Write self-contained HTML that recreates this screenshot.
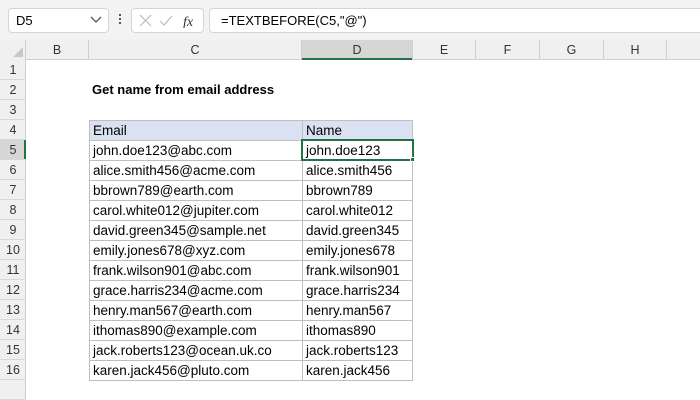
<!DOCTYPE html><html><head><style>
*{margin:0;padding:0;box-sizing:border-box}
body{width:700px;height:400px;background:#fff;font-family:"Liberation Sans",Calibri,sans-serif;position:relative;overflow:hidden;font-size:13.5px;color:#000}
.a{position:absolute}
</style></head><body>
<div class="a" style="left:0;top:0;width:700px;height:40px;background:#f3f3f3"></div>
<div class="a" style="left:8px;top:8px;width:101px;height:25px;background:#fff;border:1px solid #d5d5d5;border-radius:4px;font-size:13px;padding:4px 0 0 7px">D5</div>
<svg class="a" style="left:90px;top:16px" width="12" height="8"><path d="M1 1l5 5 5-5" stroke="#555" fill="none" stroke-width="1.3"/></svg>
<div class="a" style="left:119px;top:14px;width:2px;height:2px;background:#555;box-shadow:0 4px #555,0 8px #555"></div>
<div class="a" style="left:131px;top:8px;width:73px;height:25px;background:#fff;border:1px solid #d5d5d5;border-radius:4px"></div>
<svg class="a" style="left:138px;top:14px" width="60" height="14"><path d="M2 1l11 11M13 1L2 12" stroke="#bbb" stroke-width="1.2"/><path d="M22 7l4 4 8-9" stroke="#bbb" fill="none" stroke-width="1.2"/><text x="45" y="12" font-family="Liberation Serif" font-style="italic" font-size="14" fill="#333">fx</text></svg>
<div class="a" style="left:209px;top:8px;width:495px;height:25px;background:#fff;border:1px solid #d5d5d5;border-radius:4px;font-size:13px;padding:4px 0 0 11px">=TEXTBEFORE(C5,"@")</div>
<div class="a" style="left:0;top:40px;width:700px;height:20px;background:#f0f0f0;border-bottom:1px solid #d0d0d0"></div>
<div class="a" style="left:0;top:40px;width:26px;height:360px;background:#f0f0f0;border-right:1px solid #d0d0d0"></div>
<svg class="a" style="left:12px;top:46px" width="12" height="12"><path d="M11 1V11H1z" fill="#c8c8c8"/></svg>
<div class="a" style="left:302px;top:40px;width:111px;height:20px;background:#d6d6d6;border-bottom:2px solid #217346"></div>
<div class="a" style="left:0;top:140px;width:26px;height:20px;background:#d6d6d6;border-right:2px solid #217346"></div>
<div id="cols"></div><div id="rows"></div>
<div class="a" style="left:89px;top:120px;width:324px;height:20px;background:#d9e1f2"></div>
<div id="grid"></div>
<div class="a" style="left:92px;top:82px;font-weight:bold;font-size:13px">Get name from email address</div>
<div class="a" style="left:301px;top:139px;width:113px;height:22px;border:2px solid #217346"></div>
<div class="a" style="left:410px;top:157px;width:5px;height:5px;background:#217346;border:1px solid #fff"></div>
<script>
var cols=[["B",26,89],["C",89,302],["D",302,413],["E",413,476],["F",476,540],["G",540,604],["H",604,667],["",667,730]];
var h="";cols.forEach(function(c){h+='<div class="a" style="left:'+c[1]+'px;top:40px;width:'+(c[2]-c[1])+'px;height:20px;border-right:1px solid #d0d0d0;text-align:center;font-size:12.5px;line-height:20px;color:#333">'+c[0]+'</div>'});
for(var r=1;r<=17;r++){h+='<div class="a" style="left:0;top:'+(40+r*20)+'px;width:26px;height:20px;border-bottom:1px solid #d8d8d8;text-align:center;font-size:12.5px;line-height:20px;color:#333">'+(r<17?r:'')+'</div>'}
var d=[["Email","Name"],["john.doe123@abc.com","john.doe123"],["alice.smith456@acme.com","alice.smith456"],["bbrown789@earth.com","bbrown789"],["carol.white012@jupiter.com","carol.white012"],["david.green345@sample.net","david.green345"],["emily.jones678@xyz.com","emily.jones678"],["frank.wilson901@abc.com","frank.wilson901"],["grace.harris234@acme.com","grace.harris234"],["henry.man567@earth.com","henry.man567"],["ithomas890@example.com","ithomas890"],["jack.roberts123@ocean.uk.co","jack.roberts123"],["karen.jack456@pluto.com","karen.jack456"]];
d.forEach(function(x,i){var t=120+i*20;
h+='<div class="a" style="left:89px;top:'+t+'px;width:214px;height:21px;border:1px solid #bfbfbf;padding-left:3px;line-height:20px">'+x[0]+'</div>';
h+='<div class="a" style="left:302px;top:'+t+'px;width:111px;height:21px;border:1px solid #bfbfbf;padding-left:3px;line-height:20px">'+x[1]+'</div>';});
document.getElementById("grid").outerHTML=h;
</script>
</body></html>
